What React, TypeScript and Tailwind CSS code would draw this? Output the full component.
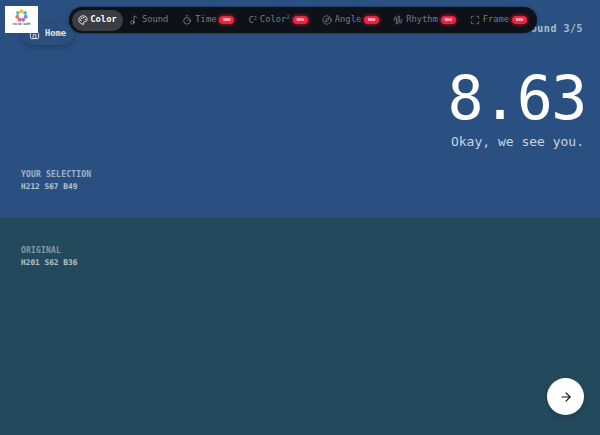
import { ArrowRight, AudioWaveform, Compass, Home, Maximize, Music2, Palette, Timer } from "lucide-react";
import type { ReactNode } from "react";

const MONO = "font-['DejaVu_Sans_Mono',monospace]";

type NavItem = {
  label: ReactNode;
  icon: ReactNode;
  isNew?: boolean;
  active?: boolean;
};

const ICON = "h-[10px] w-[10px] shrink-0";

const NAV_ITEMS: NavItem[] = [
  { label: "Color", icon: <Palette className={ICON} />, active: true },
  { label: "Sound", icon: <Music2 className={ICON} /> },
  { label: "Time", icon: <Timer className={ICON} />, isNew: true },
  {
    label: (
      <>
        Color<sup className="text-[6px]">2</sup>
      </>
    ),
    icon: <span className="text-[9px] leading-none">C<sup className="text-[5px]">2</sup></span>,
    isNew: true,
  },
  { label: "Angle", icon: <Compass className={ICON} />, isNew: true },
  { label: "Rhythm", icon: <AudioWaveform className={ICON} />, isNew: true },
  { label: "Frame", icon: <Maximize className={ICON} />, isNew: true },
];

function NewBadge() {
  return (
    <span className="flex h-[8px] w-[15px] items-center justify-center rounded-full bg-[#f0233f] text-[4px] font-bold leading-none text-white/90 shadow-[0_0_4px_rgba(255,40,70,0.8)]">
      NEW
    </span>
  );
}

export default function App() {
  return (
    <div className={`relative flex h-[435px] w-[600px] flex-col overflow-hidden ${MONO}`}>
      <div className="flex h-[218px] flex-col bg-[#2a5082] px-[21px] pb-[25px]">
        <div className="flex flex-col items-end pt-[21px] text-[10px] font-bold tracking-[0.5px] text-white/60">
          <span className="mr-[-4px]">Round 3/5</span>
        </div>
        <div className="mr-[-5px] mt-[31px] flex flex-col items-end">
          <p className="mr-[-2px] text-[60px] leading-[62px] tracking-[-1.5px] text-white">8.63</p>
          <p className="mt-[5px] text-[13px] leading-[16px] text-white/75">Okay, we see you.</p>
        </div>
        <div className="mt-auto">
          <p className="text-[8px] font-bold leading-[12px] tracking-[0.2px] text-white/55">YOUR SELECTION</p>
          <p className="text-[7.8px] font-bold leading-[12px] text-white/65">H212 S67 B49</p>
        </div>
      </div>

      <div className="flex flex-1 flex-col bg-[#234a5c] px-[21px] pt-[27px]">
        <p className="text-[8px] font-bold leading-[12px] tracking-[0.2px] text-white/45">ORIGINAL</p>
        <p className="text-[7.8px] font-bold leading-[12px] text-white/65">H201 S62 B36</p>
      </div>

      {/* overlays */}
      <button className="absolute left-[22px] top-[23px] flex h-[22px] w-[52px] items-center gap-[5px] rounded-full bg-[#2a4f7c] pl-[7px] text-[8.75px] font-bold text-white/85 shadow-[0_2px_6px_rgba(20,40,70,0.5)]" type="button">
        <Home className="h-[11px] w-[11px]" />
        Home
      </button>

      <div className="absolute left-[5px] top-[6px] flex h-[27px] w-[33px] flex-col items-center bg-white pt-[3px]">
        <svg className="h-[13px] w-[13px] opacity-85" viewBox="0 0 20 20">
          <circle cx="10" cy="3.5" r="3" fill="#e8b23a" />
          <circle cx="15.5" cy="6" r="3" fill="#3aa1d8" />
          <circle cx="16.5" cy="12" r="3" fill="#4a7fd0" />
          <circle cx="12.5" cy="16.5" r="3" fill="#8a5bc4" />
          <circle cx="7" cy="16.5" r="3" fill="#d0507a" />
          <circle cx="3.5" cy="12" r="3" fill="#e25b4a" />
          <circle cx="4.5" cy="6" r="3" fill="#55b56a" />
        </svg>
        <span className="mt-[1px] text-[3px] font-bold leading-none text-[#55556a]">COLOR GAME</span>
      </div>

      <nav className="absolute left-[69px] top-[7px] flex h-[26px] w-[468px] items-center rounded-full bg-[#0f1118] pl-[3px] shadow-[0_0_3px_rgba(0,0,0,0.4)]">
        {NAV_ITEMS.map((item, index) => (
          <div
            key={index}
            className={
              item.active
                ? "mr-[-8px] flex h-[21px] w-[51px] items-center justify-center gap-[2px] rounded-full bg-[#3c3d42] text-[8.75px] font-bold text-white"
                : "ml-[14px] flex h-[21px] items-center gap-[3px] whitespace-nowrap text-[8.75px] text-white/45"
            }
          >
            {item.icon}
            <span>{item.label}</span>
            {item.isNew ? <NewBadge /> : null}
          </div>
        ))}
      </nav>

      <button className="absolute left-[547px] top-[378px] flex h-[37px] w-[37px] items-center justify-center rounded-full bg-white text-[#111] shadow-[0_2px_6px_rgba(0,0,0,0.2)]" type="button">
        <ArrowRight className="h-[14px] w-[14px]" />
      </button>
    </div>
  );
}
